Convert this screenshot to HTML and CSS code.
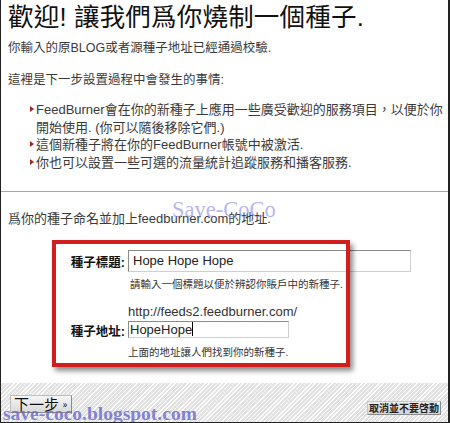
FILE: index.html
```html
<!DOCTYPE html>
<html lang="zh-Hant">
<head>
<meta charset="utf-8">
<title>FeedBurner</title>
<link rel="stylesheet" href="styles.css">
</head>
<body>
<div class="page">
  <section class="intro">
    <h1 class="title">歡迎! 讓我們爲你燒制一個種子.</h1>
    <p class="lead">你輸入的原BLOG或者源種子地址已經通過校驗.</p>
    <p class="lead2">這裡是下一步設置過程中會發生的事情:</p>
    <ul class="steps">
      <li>FeedBurner會在你的新種子上應用一些廣受歡迎的服務項目，以便於你<br>開始使用. (你可以隨後移除它們.)</li>
      <li>這個新種子將在你的FeedBurner帳號中被激活.</li>
      <li>你也可以設置一些可選的流量統計追蹤服務和播客服務.</li>
    </ul>
  </section>
  <section class="naming">
    <p class="lead naming-lead">爲你的種子命名並加上feedburner.com的地址.</p>
    <div class="form">
      <div class="label">種子標題:</div>
      <div class="field field-title">Hope Hope Hope</div>
      <div class="hint hint-1">請輸入一個標題以便於辨認你賬戶中的新種子.</div>
      <div class="url">http://feeds2.feedburner.com/</div>
      <div class="label label-2">種子地址:</div>
      <div class="field field-addr">HopeHope<span class="caret"></span></div>
      <div class="hint hint-2">上面的地址讓人們找到你的新種子.</div>
    </div>
  </section>
  <footer class="actions">
    <button class="btn-next">下一步 <span class="raquo">»</span></button>
    <button class="btn-cancel">取消並不要啓動</button>
  </footer>
  <div class="highlight"></div>
  <div class="mark mark-top">Save-CoCo</div>
  <div class="mark mark-bottom">save-coco.blogspot.com</div>
</div>
</body>
</html>
```

FILE: styles.css
```css
html, body {
  margin: 0;
  padding: 0;
  background: #fff;
}

.page {
  position: relative;
  width: 450px;
  height: 423px;
  box-sizing: border-box;
  border-left: 1px solid #222;
  border-right: 2px solid #222;
  border-bottom: 1px solid #222;
  display: flex;
  flex-direction: column;
  overflow: hidden;
  font-family: "Liberation Sans", "Noto Sans CJK TC", sans-serif;
  color: #3a3a3a;
  background: #fff;
}

.intro {
  padding: 0 7px;
}

.title {
  margin: 0;
  font-size: 25.5px;
  line-height: 34px;
  font-weight: normal;
  color: #111;
  white-space: nowrap;
  letter-spacing: 0.2px;
}

.lead {
  margin: 5px 0 0;
  font-size: 12.5px;
  line-height: 18px;
}

.lead2 {
  margin: 14px 0 0;
  font-size: 12.5px;
  line-height: 18px;
}

.steps {
  list-style: none;
  margin: 12px 0 20px;
  padding: 0 0 0 28px;
  font-size: 13px;
  line-height: 17.5px;
}

.steps li {
  position: relative;
  white-space: nowrap;
}

.steps li::before {
  content: "";
  position: absolute;
  left: -6px;
  top: 5px;
  border-left: 4px solid #a02828;
  border-top: 3.5px solid transparent;
  border-bottom: 3.5px solid transparent;
}

.naming {
  border-top: 1px solid #a6a6a6;
  padding: 18px 7px 0;
}

.naming-lead {
  margin: 0;
  font-size: 13px;
}

.form {
  display: grid;
  grid-template-columns: 120px auto;
  justify-content: start;
  margin-top: 22px;
}

.label {
  grid-column: 1;
  text-align: right;
  padding-right: 3px;
  font-size: 12.5px;
  font-weight: bold;
  color: #111;
  align-self: center;
}

.field {
  grid-column: 2;
  box-sizing: border-box;
  border: 1px solid;
  border-color: #8a8a8a #cfcfcf #cfcfcf #8a8a8a;
  background: #fff;
  color: #222;
  font-size: 13px;
  white-space: nowrap;
}

.field-title {
  width: 283px;
  height: 22px;
  line-height: 20px;
  padding-left: 4px;
}

.field-addr {
  width: 161px;
  height: 17px;
  line-height: 15px;
  padding-left: 1px;
  margin-top: 1px;
}

.caret {
  display: inline-block;
  width: 1px;
  height: 14px;
  background: #000;
  vertical-align: -2px;
}

.label-2 {
  margin-top: 1px;
}

.hint {
  grid-column: 2;
  font-size: 10.5px;
  line-height: 14px;
  margin-top: 5px;
  color: #333;
}

.hint-1 {
  padding-left: 2px;
}

.url {
  grid-column: 2;
  font-size: 13px;
  line-height: 16px;
  margin-top: 13px;
  color: #333;
}

.actions {
  margin-top: auto;
  height: 39px;
  box-sizing: border-box;
  display: flex;
  justify-content: space-between;
  align-items: flex-end;
  padding: 0 7px 0 9px;
  background: repeating-linear-gradient(135deg, #fdfdfd 0 1px, #e2e2e2 1px 3px);
}

.btn-next {
  width: 62px;
  height: 18px;
  margin: 0 0 9px;
  padding: 0 0 0 3px;
  box-sizing: border-box;
  border: 1px solid;
  border-color: #bdbdbd #8a8a8a #8a8a8a #bdbdbd;
  background: linear-gradient(#f6f6f6, #d9d9d9);
  font-family: "Noto Sans CJK TC", sans-serif;
  font-size: 15px;
  line-height: 16px;
  color: #111;
  text-align: left;
  white-space: nowrap;
}

.raquo {
  font-size: 10px;
  vertical-align: 2px;
}

.btn-cancel {
  width: 74px;
  height: 14px;
  margin: 0 0 7px;
  padding: 0;
  box-sizing: border-box;
  border: 1px solid;
  border-color: #c8c8c8 #8a8a8a #8a8a8a #c8c8c8;
  background: linear-gradient(#eeeeee, #d4d4d4);
  font-family: "Noto Sans CJK TC", sans-serif;
  font-size: 10px;
  font-weight: bold;
  line-height: 12px;
  color: #222;
  white-space: nowrap;
}

.highlight {
  position: absolute;
  left: 51px;
  top: 240px;
  width: 298px;
  height: 127px;
  box-sizing: border-box;
  border: 4px solid #d01e1e;
  box-shadow: 3px 4px 5px rgba(0, 0, 0, 0.45);
  pointer-events: none;
}

.mark {
  position: absolute;
  font-family: "Liberation Serif", serif;
  white-space: nowrap;
  pointer-events: none;
}

.mark-top {
  left: 171px;
  top: 199px;
  font-size: 22.5px;
  line-height: 22.5px;
  color: rgba(120, 120, 220, 0.55);
}

.mark-bottom {
  left: 2px;
  top: 404px;
  font-size: 19.5px;
  line-height: 19.5px;
  font-weight: bold;
  color: rgba(95, 95, 200, 0.75);
}
```
